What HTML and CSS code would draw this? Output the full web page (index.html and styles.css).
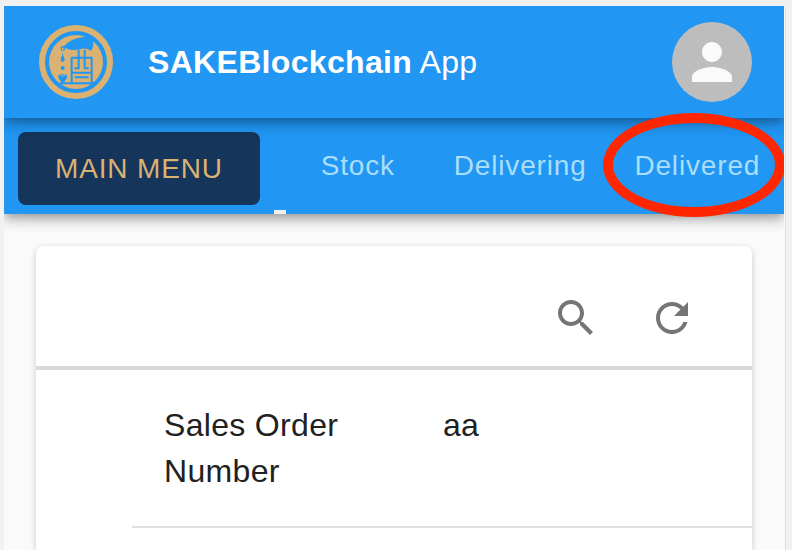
FILE: index.html
```html
<!DOCTYPE html>
<html lang="en">

<head>
    <meta charset="UTF-8">
    <meta name="viewport" content="width=device-width, initial-scale=1.0">
    <title>SAKEBlockchain App</title>
    <link rel="stylesheet" href="styles.css">
</head>

<body>
    <div class="page">
        <header class="app-bar">
            <svg class="logo" viewBox="27 30 222 222" role="img" aria-label="SAKEBlockchain">
                <circle class="logo-ring" cx="138" cy="141" r="102" />
                <circle class="logo-gold" cx="138" cy="141" r="81" />
                <!-- bottle -->
                <path class="logo-blue" d="M92 95 L104 92 C116 78 134 70 162 66 L168 58 L192 76 L189 80 C191 92 188 103 181 108 C174 100 162 99 150 103 C134 107 118 105 105 99 L104 106 L94 108 Z" />
                <path class="logo-gold" d="M96 98 H101 L100 105 H96 Z" />
                <!-- drops and cup -->
                <path class="logo-blue" d="M98 110 C98 122 104 128 104 134 A6 6 0 0 1 92 134 C92 128 98 122 98 110 Z" />
                <circle class="logo-blue" cx="98" cy="159" r="6" />
                <path class="logo-blue" d="M84 180 Q98 175 112 180 C111 190 108 195 104 197 V202 H92 V197 C88 195 85 190 84 180 Z" />
                <path class="logo-cup" d="M88 181 Q98 185 108 181" />
                <!-- barrel -->
                <path class="logo-line" d="M125 203 V128 H185 V203 M146 104 V160 H134 M164 104 V160 H176 M125 173 H185 M134 187 H176" />
                <path class="logo-line" d="M90 205 H196" />
            </svg>
            <h1 class="title"><b>SAKEBlockchain</b> App</h1>
            <button class="avatar" type="button" aria-label="Account">
                <svg viewBox="0 0 24 24">
                    <path d="M12 12c2.21 0 4-1.79 4-4s-1.79-4-4-4-4 1.79-4 4 1.79 4 4 4zm0 2c-2.67 0-8 1.34-8 4v2h16v-2c0-2.66-5.33-4-8-4z" />
                </svg>
            </button>
        </header>

        <nav class="tab-bar">
            <button class="menu-btn" type="button">MAIN MENU</button>
            <span class="indicator"></span>
            <a class="tab" href="#stock">Stock</a>
            <a class="tab" href="#delivering">Delivering</a>
            <a class="tab marked" href="#delivered">Delivered</a>
        </nav>

        <main class="card">
            <div class="toolbar">
                <button class="icon-btn" type="button" aria-label="Search">
                    <svg viewBox="0 0 24 24">
                        <path d="M15.5 14h-.79l-.28-.27C15.41 12.59 16 11.11 16 9.5 16 5.91 13.09 3 9.5 3S3 5.91 3 9.5 5.91 16 9.5 16c1.61 0 3.09-.59 4.23-1.57l.27.28v.79l5 4.99L20.49 19l-4.99-5zm-6 0C7.01 14 5 11.99 5 9.5S7.01 5 9.5 5 14 7.01 14 9.5 11.99 14 9.5 14z" />
                    </svg>
                </button>
                <button class="icon-btn" type="button" aria-label="Refresh">
                    <svg viewBox="0 0 24 24">
                        <path d="M17.65 6.35C16.2 4.9 14.21 4 12 4c-4.42 0-7.99 3.58-7.99 8s3.57 8 7.99 8c3.73 0 6.84-2.55 7.73-6h-2.08c-.82 2.33-3.04 4-5.65 4-3.31 0-6-2.69-6-6s2.69-6 6-6c1.66 0 3.14.69 4.22 1.78L13 11h7V4l-2.35 2.35z" />
                    </svg>
                </button>
            </div>
            <div class="details">
                <table>
                    <tr>
                        <th scope="row">Sales Order Number</th>
                        <td>aa</td>
                    </tr>
                </table>
            </div>
        </main>
    </div>
</body>

</html>
```

FILE: styles.css
```css
* {
    box-sizing: border-box;
}

body {
    margin: 0;
    padding: 6px 7px 0 4px;
    background-color: #f1f1f1;
    font-family: "Liberation Sans", Arial, sans-serif;
    font-size: 32px;
    color: #212121;
}

.page {
    display: flex;
    flex-direction: column;
    min-height: calc(100vh - 6px);
    background-color: #fafafa;
    border-right: 1px solid #fafafa;
    box-shadow: 1px 0 0 #dcdcdc;
    overflow: hidden;
}

button {
    border: none;
    font-family: inherit;
    cursor: pointer;
}

.app-bar,
.tab-bar {
    display: flex;
    align-items: center;
    background-color: #2196f3;
    box-shadow: 0 4px 8px -2px rgba(0, 0, 0, 0.2), 0 8px 10px 0 rgba(0, 0, 0, 0.14), 0 2px 20px 0 rgba(0, 0, 0, 0.12);
}

.app-bar {
    height: 112px;
    padding: 0 32px 0 35px;
    position: relative;
    z-index: 1;
}

.logo {
    width: 74px;
    height: 74px;
    margin-right: 35px;
}

.logo-ring {
    fill: none;
    stroke: #dbb272;
    stroke-width: 18;
}

.logo-gold {
    fill: #dbb272;
}

.logo-blue {
    fill: #2196f3;
}

.logo-line {
    fill: none;
    stroke: #2196f3;
    stroke-width: 6;
}

.logo-cup {
    fill: none;
    stroke: #dbb272;
    stroke-width: 2;
}

.title {
    flex: 1;
    margin: 0;
    font-size: 32px;
    font-weight: normal;
    letter-spacing: 0.01em;
    color: #fff;
}

.avatar {
    display: flex;
    align-items: center;
    justify-content: center;
    width: 80px;
    height: 80px;
    padding: 0;
    border-radius: 50%;
    background-color: #bdbdbd;
}

.avatar svg {
    width: 60px;
    height: 60px;
    fill: #fafafa;
}

.tab-bar {
    height: 96px;
    padding-left: 14px;
    font-size: 28px;
    letter-spacing: 0.03em;
}

.menu-btn {
    height: 73px;
    margin-top: 5px;
    padding: 0 37px;
    border-radius: 8px;
    background-color: #15355b;
    color: #dbb272;
    font-size: 28px;
    letter-spacing: 0.03em;
    white-space: nowrap;
}

.indicator {
    align-self: flex-end;
    width: 12px;
    height: 4px;
    margin-left: 14px;
    background-color: #f1f1f1;
}

.tab {
    min-width: 144px;
    padding: 0 24px;
    text-align: center;
    text-decoration: none;
    color: #a9defb;
}

/* red circle around the tab */
.marked {
    position: relative;
    z-index: 2;
}

.marked::after {
    content: "";
    position: absolute;
    top: -37px;
    bottom: -35px;
    left: -7px;
    right: -1px;
    border: 10px solid #ff2600;
    border-radius: 50%;
    pointer-events: none;
}

.card {
    flex: 1;
    margin: 32px 32px 0;
    background-color: #fff;
    border-radius: 8px 8px 0 0;
    box-shadow: 0 2px 6px 0 rgba(0, 0, 0, 0.2);
}

.toolbar {
    display: flex;
    align-items: center;
    justify-content: flex-end;
    height: 124px;
    padding: 24px 32px 0 0;
    border-bottom: 4px solid #d9d9d9;
}

.icon-btn {
    width: 96px;
    height: 96px;
    padding: 24px;
    background: none;
}

.icon-btn svg {
    display: block;
    width: 48px;
    height: 48px;
    fill: #757575;
}

.details {
    padding-left: 96px;
}

table {
    width: 100%;
    table-layout: fixed;
    border-collapse: collapse;
}

th,
td {
    padding: 32px;
    border-bottom: 2px solid #e0e0e0;
    font-weight: normal;
    line-height: 46px;
    letter-spacing: 0.01em;
    text-align: left;
    vertical-align: top;
}

th {
    width: 45%;
}
```
